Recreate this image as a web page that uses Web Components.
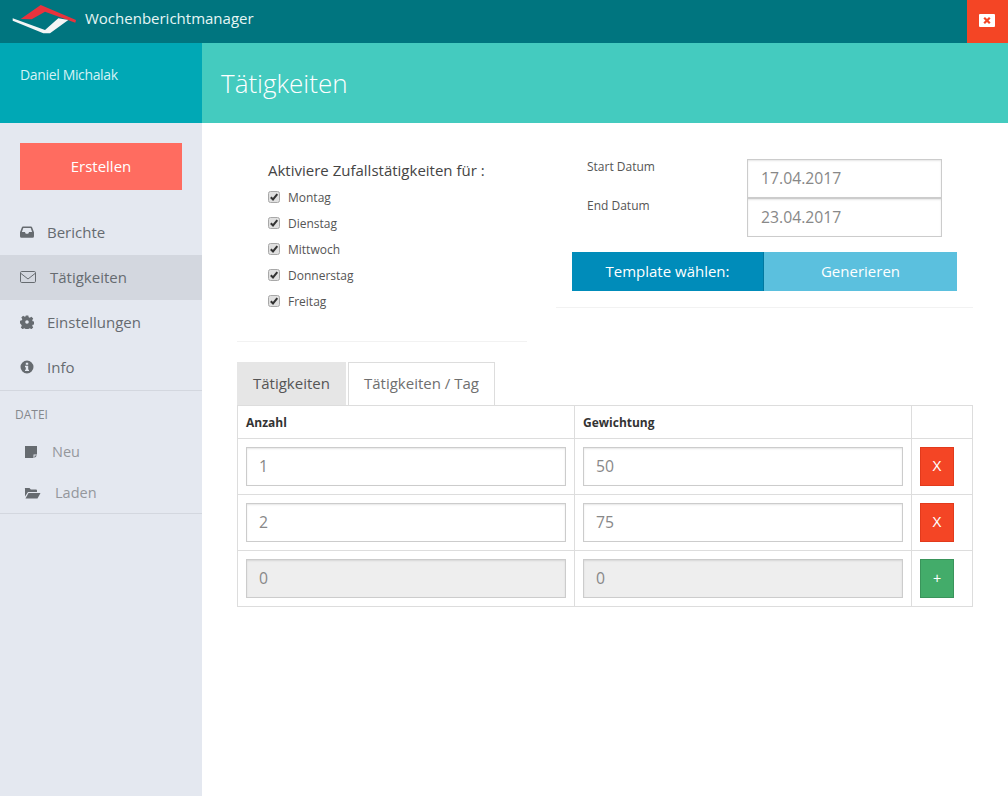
<!DOCTYPE html>
<html>
<head>
<meta charset="utf-8">
<title>Wochenberichtmanager</title>
<style>
html, body { margin: 0; padding: 0; background: #fff; }
body { font-family: "Open Sans", sans-serif; }
</style>
</head>
<body>
<app-shell>
  <app-header slot="header" title-text="Wochenberichtmanager"></app-header>
  <app-sidebar slot="sidebar" user="Daniel Michalak"></app-sidebar>
  <page-title slot="title">Tätigkeiten</page-title>
  <activity-page slot="content"></activity-page>
</app-shell>

<script>
class AppShell extends HTMLElement {
  constructor() {
    super();
    this.attachShadow({mode: 'open'});
    this.shadowRoot.innerHTML = `
    <style>
    :host { display: grid; grid-template-columns: 202px 1fr; grid-template-rows: 43px 80px 1fr; height: 796px; }
    .top { grid-column: 1 / 3; display: block; }
    .side { grid-column: 1; grid-row: 2 / 4; display: block; }
    </style>
    <div class="top"><slot name="header"></slot></div>
    <div class="side"><slot name="sidebar"></slot></div>
    <div><slot name="title"></slot></div>
    <div><slot name="content"></slot></div>`;
  }
}
customElements.define('app-shell', AppShell);

class AppHeader extends HTMLElement {
  constructor() {
    super();
    this.attachShadow({mode: 'open'});
    this.shadowRoot.innerHTML = `
    <style>
    :host { display: flex; height: 43px; background: #00757f; color: #e6f5f5; }
    svg.logo { flex: none; margin: 4px 0 0 12px; }
    span { margin: 7px 0 0 8px; line-height: 22px; font-size: 15px; font-weight: 500; }
    .spacer { flex: 1; }
    .close { width: 41px; height: 43px; box-sizing: border-box; padding: 14px 0 0 12px; background: #f44525; }
    .close svg { display: block; }
    </style>
    <svg class="logo" width="65" height="30" viewBox="12 4 65 30">
      <polygon fill="#e8333d" points="20.700,19 40.700,5 76,20 75.300,22.700 45,11.700 31.700,19.300"/>
      <polygon fill="#f4f5f5" points="12.700,18.300 45,30 58.300,18.300 68.300,20 50,33.300 43.300,33.300 12.700,20.700"/>
    </svg>
    <span>${this.getAttribute('title-text')}</span>
    <div class="spacer"></div>
    <div class="close">
      <svg width="16" height="13" viewBox="0 0 16 13">
        <rect width="16" height="13" rx="1" fill="#fff"/>
        <path d="M5.200 3.700 L10.800 9.300 M10.800 3.700 L5.200 9.300" stroke="#f44525" stroke-width="2.200"/>
      </svg>
    </div>`;
  }
}
customElements.define('app-header', AppHeader);

class NavItem extends HTMLElement {
  constructor() {
    super();
    this.attachShadow({mode: 'open'});
    this.shadowRoot.innerHTML = `
    <style>
    :host { display: flex; align-items: center; box-sizing: border-box; height: 45px; padding: 0 0 2px 20px; color: #666b70; font-size: 15px; }
    :host([active]) { background: #d3d7df; }
    :host([sub]) { height: 41px; padding: 0 0 0 24px; color: #94979c; font-size: 14.500px; }
    ::slotted(svg) { flex: none; }
    </style>
    <slot name="icon"></slot><slot></slot>`;
  }
}
customElements.define('nav-item', NavItem);

class AppSidebar extends HTMLElement {
  constructor() {
    super();
    this.attachShadow({mode: 'open'});
    this.shadowRoot.innerHTML = `
    <style>
    :host { display: block; height: 100%; background: #e4e8f0; }
    .user { height: 80px; background: #00a8b5; color: #d5f3f5; font-size: 14px; letter-spacing: -.35px; padding: 22px 0 0 20px; box-sizing: border-box; }
    .create { height: 47px; box-sizing: border-box; padding-bottom: 2px; margin: 20px; background: #ff6c60; color: #fff; font-size: 15px; font-weight: 500; display: flex; align-items: center; justify-content: center; }
    .group { border-bottom: 1px solid #d3d7df; }
    .head { font-size: 12px; color: #85888d; padding: 16px 0 8px 15px; line-height: 16px; }
    </style>
    <div class="user">${this.getAttribute('user')}</div>
    <div class="create">Erstellen</div>
    <div class="group">
      <nav-item>
        <svg slot="icon" width="14" height="14" viewBox="0 0 14 14" style="margin-right:13px"><path fill="#666b70" fill-rule="evenodd" d="M3 1.500h8a1.200 1.200 0 0 1 1.100.8l1.900 5v4a1.500 1.500 0 0 1-1.500 1.500h-11A1.500 1.500 0 0 1 0 11.300v-4l1.900-5A1.200 1.200 0 0 1 3 1.500zM3.300 3L1.900 7h3l.9 1.800h2.400L9.100 7h3L10.700 3z"/></svg>
        Berichte
      </nav-item>
      <nav-item active>
        <svg slot="icon" width="16" height="14" viewBox="0 0 16 14" style="margin-right:14px"><rect x=".5" y="1.500" width="15" height="11" rx="1.200" fill="none" stroke="#666b70"/><path d="M1 3.500 L8 9 L15 3.500" fill="none" stroke="#666b70"/></svg>
        Tätigkeiten
      </nav-item>
      <nav-item>
        <svg slot="icon" width="14" height="14" viewBox="0 0 14 14" style="margin-right:13px"><path fill="#666b70" fill-rule="evenodd" d="M5.700 0.500h2.600l.4 1.800 1.100.5 1.600-1 1.800 1.800-1 1.600.5 1.100 1.800.4v2.600l-1.800.4-.5 1.100 1 1.600-1.800 1.800-1.600-1-1.100.5-.4 1.800H5.700l-.4-1.800-1.100-.5-1.600 1-1.800-1.800 1-1.600-.5-1.100L0 8.300V5.700l1.800-.4.500-1.100-1-1.600 1.800-1.800 1.600 1 1.100-.5zM7 5.200a1.800 1.800 0 1 0 0 3.600 1.800 1.800 0 0 0 0-3.600z"/></svg>
        Einstellungen
      </nav-item>
      <nav-item>
        <svg slot="icon" width="14" height="14" viewBox="0 0 14 14" style="margin-right:13px"><path fill="#666b70" fill-rule="evenodd" d="M7 .5a6.500 6.500 0 1 1 0 13 6.500 6.500 0 0 1 0-13zM5.800 2.700v2h2.400v-2zM5 5.800v1.400h.8v2.500H5v1.400h4V9.700h-.8V5.800z"/></svg>
        Info
      </nav-item>
    </div>
    <div class="group">
      <div class="head">DATEI</div>
      <nav-item sub>
        <svg slot="icon" width="14" height="14" viewBox="0 0 14 14" style="margin-right:14px"><path fill="#666b70" fill-rule="evenodd" d="M1 1h12v8.500h-3.500V13H1zM10.500 10.500V13L13 10.500z"/></svg>
        Neu
      </nav-item>
      <nav-item sub>
        <svg slot="icon" width="17" height="14" viewBox="0 0 17 14" style="margin-right:14px"><path fill="#666b70" d="M1 2h4.500l1.300 1.500H12a1 1 0 0 1 1 1V6H4L1 10.500V3a1 1 0 0 1 0-1z"/><path fill="#666b70" d="M4.500 7H16.500L13.500 12.500H1.500z"/></svg>
        Laden
      </nav-item>
    </div>`;
  }
}
customElements.define('app-sidebar', AppSidebar);

class PageTitle extends HTMLElement {
  constructor() {
    super();
    this.attachShadow({mode: 'open'});
    this.shadowRoot.innerHTML = `
    <style>
    :host { display: flex; align-items: center; height: 80px; padding-left: 19px; background: #44cbbf; color: #fff; font-size: 26px; font-weight: 300; }
    </style>
    <slot></slot>`;
  }
}
customElements.define('page-title', PageTitle);

class DayCheck extends HTMLElement {
  constructor() {
    super();
    this.attachShadow({mode: 'open'});
    this.shadowRoot.innerHTML = `
    <style>
    :host { display: flex; align-items: center; height: 26px; font-size: 12px; color: #555; }
    svg { margin-right: 8px; flex: none; }
    </style>
    <svg width="12" height="12" viewBox="0 0 12 12">
      <rect x=".5" y=".5" width="11" height="11" rx="2" fill="#e0e0e0" stroke="#a8a8a8"/>
      <path d="M2.800 6.200 L5 8.500 L9.300 3.200" fill="none" stroke="#333" stroke-width="2"/>
    </svg>
    <slot></slot>`;
  }
}
customElements.define('day-check', DayCheck);

class TextField extends HTMLElement {
  constructor() {
    super();
    this.attachShadow({mode: 'open'});
    this.shadowRoot.innerHTML = `
    <style>
    :host { display: flex; align-items: center; box-sizing: border-box; height: 39px; padding: 0 0 2px var(--field-pad, 13px); border: 1px solid #ccc; box-shadow: inset 0 1px 2px rgba(0,0,0,.1); background: #fff; color: #888; font-size: 15.750px; }
    :host([disabled]) { background: #eee; }
    </style>
    <slot></slot>`;
  }
}
customElements.define('text-field', TextField);

class ActivityPage extends HTMLElement {
  constructor() {
    super();
    this.attachShadow({mode: 'open'});
    this.shadowRoot.innerHTML = `
    <style>
    :host { display: block; padding: 0 35px; color: #444; }
    .top { display: grid; grid-template-columns: 290px 417px; column-gap: 29px; margin-right: -1px; height: 239px; }
    .panel { box-sizing: border-box; border-bottom: 1px solid #f2f2f2; }
    .days { height: 219px; padding: 36px 0 0 31px; }
    .days h4 { margin: 0 0 3px; font-size: 15px; font-weight: 400; line-height: 22px; color: #444; }
    .dates { height: 185px; padding: 36px 16px 0 16px; }
    .row { display: flex; justify-content: space-between; padding-right: 15px; font-size: 12px; color: #555; }
    .row span { padding: 0 0 0 15px; line-height: 16px; }
    .row text-field { width: 195px; }
    .btns { display: flex; margin-top: 15px; height: 39px; color: #fff; font-size: 15px; font-weight: 500; }
    .btns div { display: flex; align-items: center; justify-content: center; box-sizing: border-box; padding-bottom: 2px; }
    .tpl { width: 192px; background: #008cba; border-right: 1px solid #0079a1; }
    .gen { flex: 1; background: #5bc0de; }
    .tabs { display: flex; gap: 2px; height: 43px; }
    .tabs div { display: flex; align-items: center; box-sizing: border-box; padding-bottom: 2px; font-size: 15px; }
    .t1 { width: 109px; padding-left: 16px; background: #e6e6e6; color: #555; }
    .t2 { width: 147px; padding-left: 15px; border: 1px solid #ddd; border-bottom: 0; color: #6f6f6f; background: #fff; }
    table { width: 735px; table-layout: fixed; border-collapse: collapse; --field-pad: 12px; }
    td, th { border: 1px solid #ddd; padding: 8px; box-sizing: border-box; }
    th { text-align: left; font-size: 12px; font-weight: 700; color: #333; height: 33px; padding-top: 6px; padding-bottom: 6px; }
    td { height: 56px; }
    .act { width: 34px; height: 39px; display: flex; align-items: center; justify-content: center; color: #fff; box-sizing: border-box; padding-bottom: 2px; font-family: "Liberation Sans", sans-serif; font-size: 14px; }
    .del { background: #f44525; border: 1px solid #e23a1c; }
    .add { background: #43ac6a; border: 1px solid #3a945b; }
    </style>
    <div class="top">
      <div class="panel days">
        <h4>Aktiviere Zufallstätigkeiten für :</h4>
        <day-check>Montag</day-check>
        <day-check>Dienstag</day-check>
        <day-check>Mittwoch</day-check>
        <day-check>Donnerstag</day-check>
        <day-check>Freitag</day-check>
      </div>
      <div class="panel dates">
        <div class="row"><span>Start Datum</span><text-field>17.04.2017</text-field></div>
        <div class="row"><span>End Datum</span><text-field>23.04.2017</text-field></div>
        <div class="btns"><div class="tpl">Template wählen:</div><div class="gen">Generieren</div></div>
      </div>
    </div>
    <div class="tabs"><div class="t1">Tätigkeiten</div><div class="t2">Tätigkeiten / Tag</div></div>
    <table>
      <colgroup><col style="width:337px"><col style="width:337px"><col style="width:61px"></colgroup>
      <tr><th>Anzahl</th><th>Gewichtung</th><th></th></tr>
      <tr><td><text-field>1</text-field></td><td><text-field>50</text-field></td><td><div class="act del">X</div></td></tr>
      <tr><td><text-field>2</text-field></td><td><text-field>75</text-field></td><td><div class="act del">X</div></td></tr>
      <tr><td><text-field disabled>0</text-field></td><td><text-field disabled>0</text-field></td><td><div class="act add">+</div></td></tr>
    </table>`;
  }
}
customElements.define('activity-page', ActivityPage);
</script>
</body>
</html>
